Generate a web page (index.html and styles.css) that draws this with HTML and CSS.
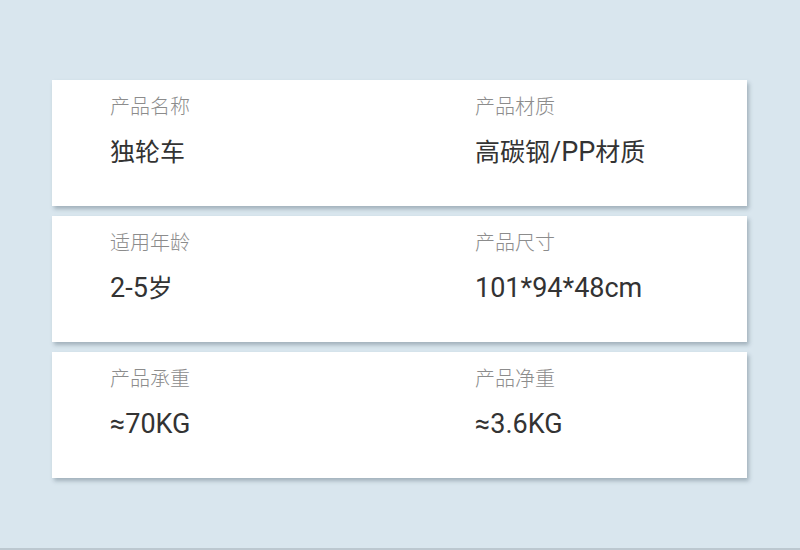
FILE: index.html
```html
<!DOCTYPE html>
<html lang="zh">
<head>
<meta charset="utf-8">
<link rel="stylesheet" href="styles.css">
</head>
<body>
<div class="page">
  <div class="list">
    <div class="card">
      <div class="cell"><div class="label">产品名称</div><div class="value">独轮车</div></div>
      <div class="cell"><div class="label">产品材质</div><div class="value">高碳钢<span class="latin">/PP</span>材质</div></div>
    </div>
    <div class="card">
      <div class="cell"><div class="label">适用年龄</div><div class="value"><span class="latin">2-5</span>岁</div></div>
      <div class="cell"><div class="label">产品尺寸</div><div class="value"><span class="latin">101*94*48cm</span></div></div>
    </div>
    <div class="card">
      <div class="cell"><div class="label">产品承重</div><div class="value"><span class="latin">≈70KG</span></div></div>
      <div class="cell"><div class="label">产品净重</div><div class="value"><span class="latin">≈3.6KG</span></div></div>
    </div>
  </div>
  <div class="footer"></div>
</div>
</body>
</html>
```
FILE: styles.css
```css
html, body {
  margin: 0;
  padding: 0;
}
body {
  background: #d9e6ee;
  font-family: "Noto Sans CJK SC", "Noto Sans", sans-serif;
}
.page {
  width: 800px;
  height: 550px;
  display: flex;
  flex-direction: column;
}
.list {
  flex: 1;
  padding: 80px 0 0 52px;
  display: flex;
  flex-direction: column;
  gap: 10px;
}
.card {
  width: 695px;
  height: 126px;
  background: #fff;
  box-shadow: 2px 3px 4px rgba(60, 80, 95, 0.35);
  display: grid;
  grid-template-columns: 365px 1fr;
  padding-left: 58px;
  box-sizing: border-box;
}
.cell {
  padding-top: 12px;
}
.label {
  font-size: 20px;
  line-height: 28px;
  font-weight: 200;
  color: #8c8c8c;
}
.value {
  margin-top: 14px;
  font-size: 25px;
  line-height: 32px;
  color: #333;
}
.latin {
  font-family: Roboto, "Noto Sans", sans-serif;
  font-size: 27px;
}
.footer {
  height: 2px;
  background: #bcc8d0;
}
```
